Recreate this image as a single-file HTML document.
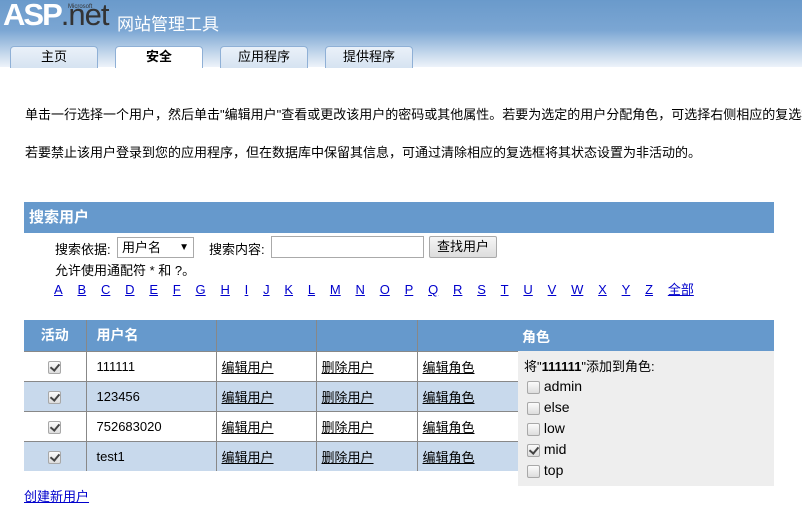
<!DOCTYPE html>
<html><head><meta charset="utf-8">
<style>
*{margin:0;padding:0;box-sizing:border-box}
body{width:802px;height:516px;overflow:hidden;background:#fff;font-family:"Liberation Sans","Noto Sans CJK SC",sans-serif;font-size:13px;color:#000;position:relative}
.a{position:absolute;white-space:nowrap}
#hdr{position:absolute;left:0;top:0;width:802px;height:67px;background:linear-gradient(#6a9acb 0%,#7ba6d3 45%,#c5d8ec 80%,#eef3fa 100%)}
.tab{position:absolute;top:46px;width:88px;height:22px;border:1px solid #8fb0d6;border-bottom:none;border-radius:4px 4px 0 0;background:linear-gradient(#eaf1f9,#d6e3f1);text-align:center;font-size:13px;line-height:20px}
.tab.on{background:#fff;font-weight:bold}
a{color:#00c;text-decoration:underline}
.bar{position:absolute;background:#6699cc;color:#fff;font-weight:bold}
.cb{display:inline-block;width:13px;height:13px;border:1px solid #a8a8a8;border-radius:2px;background:linear-gradient(#fbfbfb,#ddd);position:relative;vertical-align:middle}
.cb.k::after{content:"";position:absolute;left:3px;top:0px;width:4px;height:7px;border:solid #444;border-width:0 2px 2px 0;transform:rotate(40deg)}
table{position:absolute;left:24px;top:320px;border-collapse:collapse;font-size:13px}
td,th{height:30px;padding:0 5px;border-left:1px solid #888;border-top:1px solid #888;text-align:left}
th{background:#6699cc;color:#fff;font-size:14px;height:31px;border-top:none}
tr.alt td{background:#c8d9ec}
td a{color:#000}
td.u,th.u{padding-left:10px}
#letters a{display:inline-block;margin-right:14.8px}
</style></head><body>
<div id="hdr"></div>
<div class="a" style="left:3px;top:-3px;font-size:31px;font-weight:bold;color:#fff;letter-spacing:-2px;font-family:'Liberation Sans',sans-serif">ASP<span style="color:#333;font-weight:normal;letter-spacing:-1px">.net</span></div>
<div class="a" style="left:68px;top:4px;font-size:6px;color:#333">Microsoft</div>
<div class="a" style="left:117px;top:10px;font-size:17px;color:#fff">网站管理工具</div>
<div class="tab" style="left:10px">主页</div>
<div class="tab on" style="left:115px">安全</div>
<div class="tab" style="left:220px">应用程序</div>
<div class="tab" style="left:325px">提供程序</div>

<div class="a" style="left:25px;top:104px">单击一行选择一个用户，然后单击"编辑用户"查看或更改该用户的密码或其他属性。若要为选定的用户分配角色，可选择右侧相应的复选框。</div>
<div class="a" style="left:25px;top:142px">若要禁止该用户登录到您的应用程序，但在数据库中保留其信息，可通过清除相应的复选框将其状态设置为非活动的。</div>

<div class="bar a" style="left:24px;top:202px;width:750px;height:31px;font-size:15px;line-height:31px;padding-left:5px">搜索用户</div>
<div class="a" style="left:55px;top:239px">搜索依据:</div>
<div class="a" style="left:117px;top:237px;width:77px;height:21px;border:1px solid #aaa;padding-left:4px;line-height:19px">用户名<span style="position:absolute;right:4px;font-size:10px">▼</span></div>
<div class="a" style="left:209px;top:239px">搜索内容:</div>
<div class="a" style="left:271px;top:236px;width:153px;height:22px;border:1px solid #aaa"></div>
<div class="a" style="left:429px;top:236px;width:68px;height:22px;border:1px solid #aaa;border-radius:2px;background:linear-gradient(#f6f6f6,#ddd);text-align:center;line-height:20px">查找用户</div>
<div class="a" style="left:55px;top:260px">允许使用通配符 * 和 ?。</div>
<div class="a" id="letters" style="left:54px;top:279px"><a>A</a><a>B</a><a>C</a><a>D</a><a>E</a><a>F</a><a>G</a><a>H</a><a>I</a><a>J</a><a>K</a><a>L</a><a>M</a><a>N</a><a>O</a><a>P</a><a>Q</a><a>R</a><a>S</a><a>T</a><a>U</a><a>V</a><a>W</a><a>X</a><a>Y</a><a>Z</a><a>全部</a></div>

<div class="bar a" style="left:24px;top:320px;width:750px;height:31px"></div>
<table>
<tr><th style="width:62px;text-align:center;border-left:none">活动</th><th class="u" style="width:130px">用户名</th><th style="width:100px"></th><th style="width:101px"></th><th style="width:101px"></th></tr>
<tr><td style="text-align:center;border-left:none"><span class="cb k"></span></td><td class="u">111111</td><td><a>编辑用户</a></td><td><a>删除用户</a></td><td><a>编辑角色</a></td></tr>
<tr class="alt"><td style="text-align:center;border-left:none"><span class="cb k"></span></td><td class="u">123456</td><td><a>编辑用户</a></td><td><a>删除用户</a></td><td><a>编辑角色</a></td></tr>
<tr><td style="text-align:center;border-left:none"><span class="cb k"></span></td><td class="u">752683020</td><td><a>编辑用户</a></td><td><a>删除用户</a></td><td><a>编辑角色</a></td></tr>
<tr class="alt"><td style="text-align:center;border-left:none"><span class="cb k"></span></td><td class="u">test1</td><td><a>编辑用户</a></td><td><a>删除用户</a></td><td><a>编辑角色</a></td></tr>
</table>
<div class="a" style="left:522px;top:327px;color:#fff;font-weight:bold;font-size:14px">角色</div>
<div class="a" style="left:518px;top:351px;width:256px;height:135px;background:#eee"></div>
<div class="a" style="left:524px;top:356px">将"<b>111111</b>"添加到角色:</div>
<div class="a" style="left:527px;top:376px;line-height:21px;font-size:14px">
<div><span class="cb"></span> admin</div>
<div><span class="cb"></span> else</div>
<div><span class="cb"></span> low</div>
<div><span class="cb k"></span> mid</div>
<div><span class="cb"></span> top</div>
</div>
<div class="a" style="left:24px;top:486px"><a>创建新用户</a></div>
</body></html>
